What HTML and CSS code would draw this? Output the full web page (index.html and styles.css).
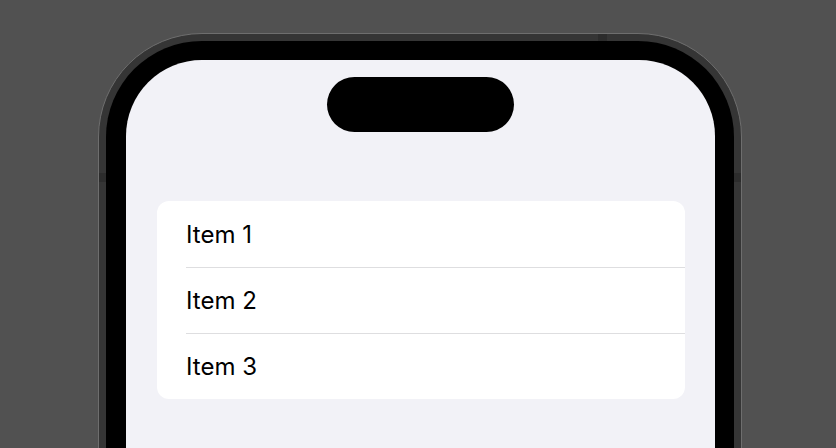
FILE: index.html
```html
<!DOCTYPE html>
<html>
<head>
<meta charset="utf-8">
<link rel="stylesheet" href="styles.css">
</head>
<body>
<div class="phone">
  <span class="band band-left"></span>
  <span class="band band-right"></span>
  <span class="band band-top"></span>
  <div class="bezel">
    <div class="screen">
      <div class="island"></div>
      <ul class="list">
        <li class="row"><span class="label">Item 1</span></li>
        <li class="row"><span class="label">Item 2</span></li>
        <li class="row"><span class="label">Item 3</span></li>
      </ul>
    </div>
  </div>
</div>
</body>
</html>
```
FILE: styles.css
```css
html, body {
  margin: 0;
  padding: 0;
  height: 100%;
  overflow: hidden;
}
body {
  background: #515151;
  font-family: Inter, "Noto Sans", sans-serif;
  padding: 33px 0 0 98px;
  box-sizing: border-box;
}
.phone {
  position: relative;
  width: 644px;
  height: 480px;
  box-sizing: border-box;
  border: 1px solid #6e6e6e;
  border-radius: 104px 104px 0 0;
  background: #353535;
  padding: 7px 7px 0 7px;
}
.band {
  position: absolute;
  background: #2c2c2c;
}
.band-left { left: 0; top: 139px; width: 7px; height: 9px; }
.band-right { right: 0; top: 139px; width: 7px; height: 9px; }
.band-top { left: 499px; top: 0; width: 9px; height: 7px; }
.bezel {
  background: #000;
  border-radius: 96px 96px 0 0;
  padding: 19px 19px 0 20px;
  height: 100%;
  box-sizing: border-box;
}
.screen {
  background: #f2f2f7;
  border-radius: 76px 76px 0 0;
  height: 100%;
  padding-top: 17px;
  box-sizing: border-box;
  display: flex;
  flex-direction: column;
  align-items: center;
}
.island {
  width: 187px;
  height: 55px;
  background: #000;
  border-radius: 28px;
  flex: none;
}
.list {
  list-style: none;
  margin: 69px 0 0 0;
  padding: 0;
  width: 528px;
  margin-left: 1px;
  background: #fff;
  border-radius: 12px;
  overflow: hidden;
}
.row {
  height: 66px;
  display: flex;
  align-items: center;
  padding-left: 29px;
}
.row .label {
  font-size: 24px;
  color: #000;
  flex: 1;
  height: 66px;
  line-height: 68px;
  letter-spacing: 0;
}
.row + .row .label {
  box-shadow: inset 0 1px 0 #dedee0;
}
```
